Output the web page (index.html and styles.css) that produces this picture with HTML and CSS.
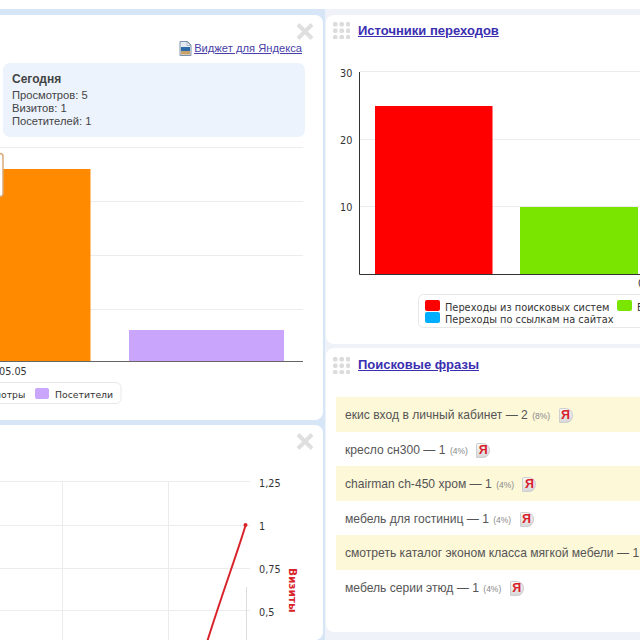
FILE: index.html
```html
<!DOCTYPE html>
<html lang="ru">
<head>
  <meta charset="UTF-8" />
  <title>Статистика</title>
  <link rel="stylesheet" href="styles.css">
</head>
<body>

<div class="board">
  <div class="col col-left">

    <section class="panel panel-today">
      <svg class="close" width="18" height="17" viewBox="0 0 18 17"><path d="M2 1.500l14 14M16 1.500l-14 14"/></svg>
      <div class="widget-row">
        <svg class="doc-icon" width="13" height="15" viewBox="0 0 13 15">
          <path d="M1 .5h7.500l3.500 3.500v10.500h-11z" fill="#e4ebf3" stroke="#7f93a8"/>
          <path d="M2 6h9v4h-9z" fill="#2c6aa8"/>
          <path d="M2 10h9v3.500h-9z" fill="#c9a26a"/>
          <path d="M8 1l3.500 3.500h-3.500z" fill="#fff" stroke="#7f93a8" stroke-width=".6"/>
        </svg>
        <a class="widget-link" href="#">Виджет для Яндекса</a>
      </div>
      <div class="today-box">
        <b>Сегодня</b>
        <p>Просмотров: 5</p>
        <p>Визитов: 1</p>
        <p>Посетителей: 1</p>
      </div>
      <svg class="chart chart-today" width="323" height="283" viewBox="0 137 323 283">
        <g class="grid">
          <path d="M0 147.500h303M0 201.500h303M0 255.500h303M0 309.500h303"/>
        </g>
        <rect x="-10" y="169" width="100.500" height="193" fill="#ff8a00"/>
        <rect x="129" y="330" width="155" height="32" fill="#c9a5fb"/>
        <path d="M0 361.500h303" stroke="#666" stroke-width="1.200"/>
        <rect x="-12" y="153.500" width="15" height="43" rx="3" fill="#fff" stroke="#d9a877" stroke-width="1.500"/>
        <text x="-1" y="375" class="tick">05.05</text>
        <rect x="-20" y="382.500" width="141" height="21" rx="5" fill="#fff" stroke="#e8e8e8"/>
        <text x="-6" y="398" class="tick small">мотры</text>
        <rect x="35" y="388" width="14" height="11" rx="2" fill="#c9a5fb"/>
        <text x="55" y="398" class="tick small">Посетители</text>
      </svg>
    </section>

    <section class="panel panel-visits">
      <svg class="close" width="18" height="17" viewBox="0 0 18 17"><path d="M2 1.500l14 14M16 1.500l-14 14"/></svg>
      <svg class="chart chart-visits" width="323" height="215" viewBox="0 425 323 215">
        <g class="grid">
          <path d="M0 481.500h250M0 525.500h250M0 568.500h250M0 610.500h250M62.500 481v159M168.500 481v159"/>
        </g>
        <path d="M246.500 587v53" stroke="#dcdcdc" fill="none"/>
        <path d="M245.500 525.500c-9 30-20 58-38 115" stroke="#d9232b" stroke-width="2" fill="none"/>
        <circle cx="245.500" cy="525" r="2" fill="#d9232b"/>
        <text x="259" y="487" class="tick">1,25</text>
        <text x="259" y="530" class="tick">1</text>
        <text x="259" y="573" class="tick">0,75</text>
        <text x="259" y="616" class="tick">0,5</text>
        <text class="axis-title" transform="translate(289 568) rotate(90)">Визиты</text>
      </svg>
    </section>
  </div>

  <div class="col col-right">

    <section class="panel panel-sources">
      <div class="panel-head">
        <span class="grip"></span>
        <a class="panel-title" href="#">Источники переходов</a>
      </div>
      <svg class="chart chart-sources" width="314" height="299" viewBox="326 45 314 299">
        <g class="grid">
          <path d="M360 71.500h280M360 139.500h280M360 206.500h280"/>
        </g>
        <rect x="375" y="106" width="117.500" height="168" fill="#ff0000"/>
        <rect x="520" y="207" width="118" height="67" fill="#7ae600"/>
        <path d="M359.500 72v202.500h281" stroke="#333" fill="none"/>
        <text x="340" y="77" class="tick">30</text>
        <text x="340" y="144" class="tick">20</text>
        <text x="340" y="211" class="tick">10</text>
        <text x="638" y="287" class="tick">0</text>
        <rect x="418.500" y="294.500" width="240" height="33" rx="5" fill="#fff" stroke="#e8e8e8"/>
        <rect x="425" y="300" width="15" height="11" rx="2" fill="#ff0000"/>
        <text x="445" y="311" class="legend">Переходы из поисковых систем</text>
        <rect x="617" y="300" width="15" height="11" rx="2" fill="#7ae600"/>
        <text x="637" y="311" class="legend">В</text>
        <rect x="425" y="312" width="15" height="11" rx="2" fill="#00aeff"/>
        <text x="445" y="323" class="legend">Переходы по ссылкам на сайтах</text>
      </svg>
    </section>

    <section class="panel panel-phrases">
      <div class="panel-head">
        <span class="grip"></span>
        <a class="panel-title" href="#">Поисковые фразы</a>
      </div>
      <ul class="phrases">
        <li>екис вход в личный кабинет — 2 <small>(8%)</small> <span class="ya">Я</span></li>
        <li>кресло сн300 — 1 <small>(4%)</small> <span class="ya">Я</span></li>
        <li>chairman ch-450 хром — 1 <small>(4%)</small> <span class="ya">Я</span></li>
        <li>мебель для гостиниц — 1 <small>(4%)</small> <span class="ya">Я</span></li>
        <li>смотреть каталог эконом класса мягкой мебели — 1 <small>(4%)</small> <span class="ya">Я</span></li>
        <li>мебель серии этюд — 1 <small>(4%)</small> <span class="ya">Я</span></li>
      </ul>
    </section>
  </div>
</div>

</body>
</html>
```

FILE: styles.css
```css
html, body {
  margin: 0;
  height: 640px;
  overflow: hidden;
}

body {
  background: #fff;
  padding-top: 9px;
  box-sizing: border-box;
  font-family: 'Liberation Sans', Arial, sans-serif;
  color: #444;
}

.board {
  display: grid;
  grid-template-columns: 325px 315px;
  height: 631px;
}

.col {
  display: flex;
  flex-direction: column;
  padding-top: 6px;
  min-width: 0;
}

.col-left {
  background: #d7e6f6;
  padding-right: 2px;
  gap: 5px;
}

.col-right {
  background: #eff2f8;
  gap: 4px;
}

.panel {
  position: relative;
  background: #fff;
  border-radius: 8px;
  overflow: hidden;
  flex: none;
}

.col-left .panel {
  border-top-left-radius: 0;
  border-bottom-left-radius: 0;
}

.col-right .panel {
  margin-left: 1px;
  border-top-right-radius: 0;
  border-bottom-right-radius: 0;
}

.panel-today { height: 405px; }
.panel-visits { height: 215px; }
.panel-sources { height: 329px; }
.panel-phrases { height: 284px; }

.close {
  position: absolute;
  top: 8px;
  right: 9px;
}

.close path {
  stroke: #dfdfdf;
  stroke-width: 4;
  fill: none;
}

.widget-row {
  display: flex;
  justify-content: flex-end;
  align-items: center;
  gap: 2px;
  padding: 26px 21px 0 0;
  height: 14px;
}

.widget-link {
  font-size: 11.200px;
  color: #4a3fa8;
}

.today-box {
  margin: 8px 18px 0 3px;
  height: 74px;
  box-sizing: border-box;
  padding: 10px 9px 0;
  background: #ecf3fc;
  border-radius: 7px;
  font-size: 11.200px;
  line-height: 13px;
}

.today-box b {
  display: block;
  font-size: 12px;
  margin-bottom: 3px;
}

.today-box p {
  margin: 0;
}

.chart {
  display: block;
}

.grid path {
  stroke: #ececec;
  fill: none;
}

.tick {
  font: 9.700px 'DejaVu Sans', sans-serif;
  fill: #333;
}

.tick.small {
  font-size: 9.300px;
}

.legend {
  font: 9.800px 'DejaVu Sans', sans-serif;
  fill: #333;
}

.axis-title {
  font: bold 10.500px 'DejaVu Sans', sans-serif;
  fill: #d9232b;
}

.panel-head {
  display: flex;
  align-items: center;
  gap: 8px;
  height: 30px;
  padding-left: 6px;
}

.panel-phrases .panel-head {
  height: 33px;
}

.grip {
  width: 18px;
  height: 18px;
  background: radial-gradient(circle at center, #dcdcdc 2.200px, transparent 2.700px) 0 0 / 6.500px 6.500px;
}

.panel-title {
  font-size: 13px;
  font-weight: bold;
  color: #3a2fb0;
}

.phrases {
  list-style: none;
  margin: 16px 0 0 10px;
  padding: 0;
}

.phrases li {
  height: 34.600px;
  line-height: 36px;
  padding-left: 9px;
  font-size: 12.100px;
  white-space: nowrap;
  color: #555;
}

.phrases li:nth-child(odd) {
  background: #fdf8d8;
}

.phrases small {
  font-size: 8.500px;
  color: #888;
  margin: 0 5px 0 1px;
}

.ya {
  display: inline-block;
  width: 14px;
  height: 15px;
  line-height: 15px;
  text-align: center;
  vertical-align: middle;
  background: linear-gradient(#fafafa, #d6d6d6);
  border-radius: 2px 8px 8px 2px;
  box-shadow: inset 0 0 0 1px #cfcfcf;
  font-size: 12.500px;
  font-weight: bold;
  color: #d8202a;
}
```
